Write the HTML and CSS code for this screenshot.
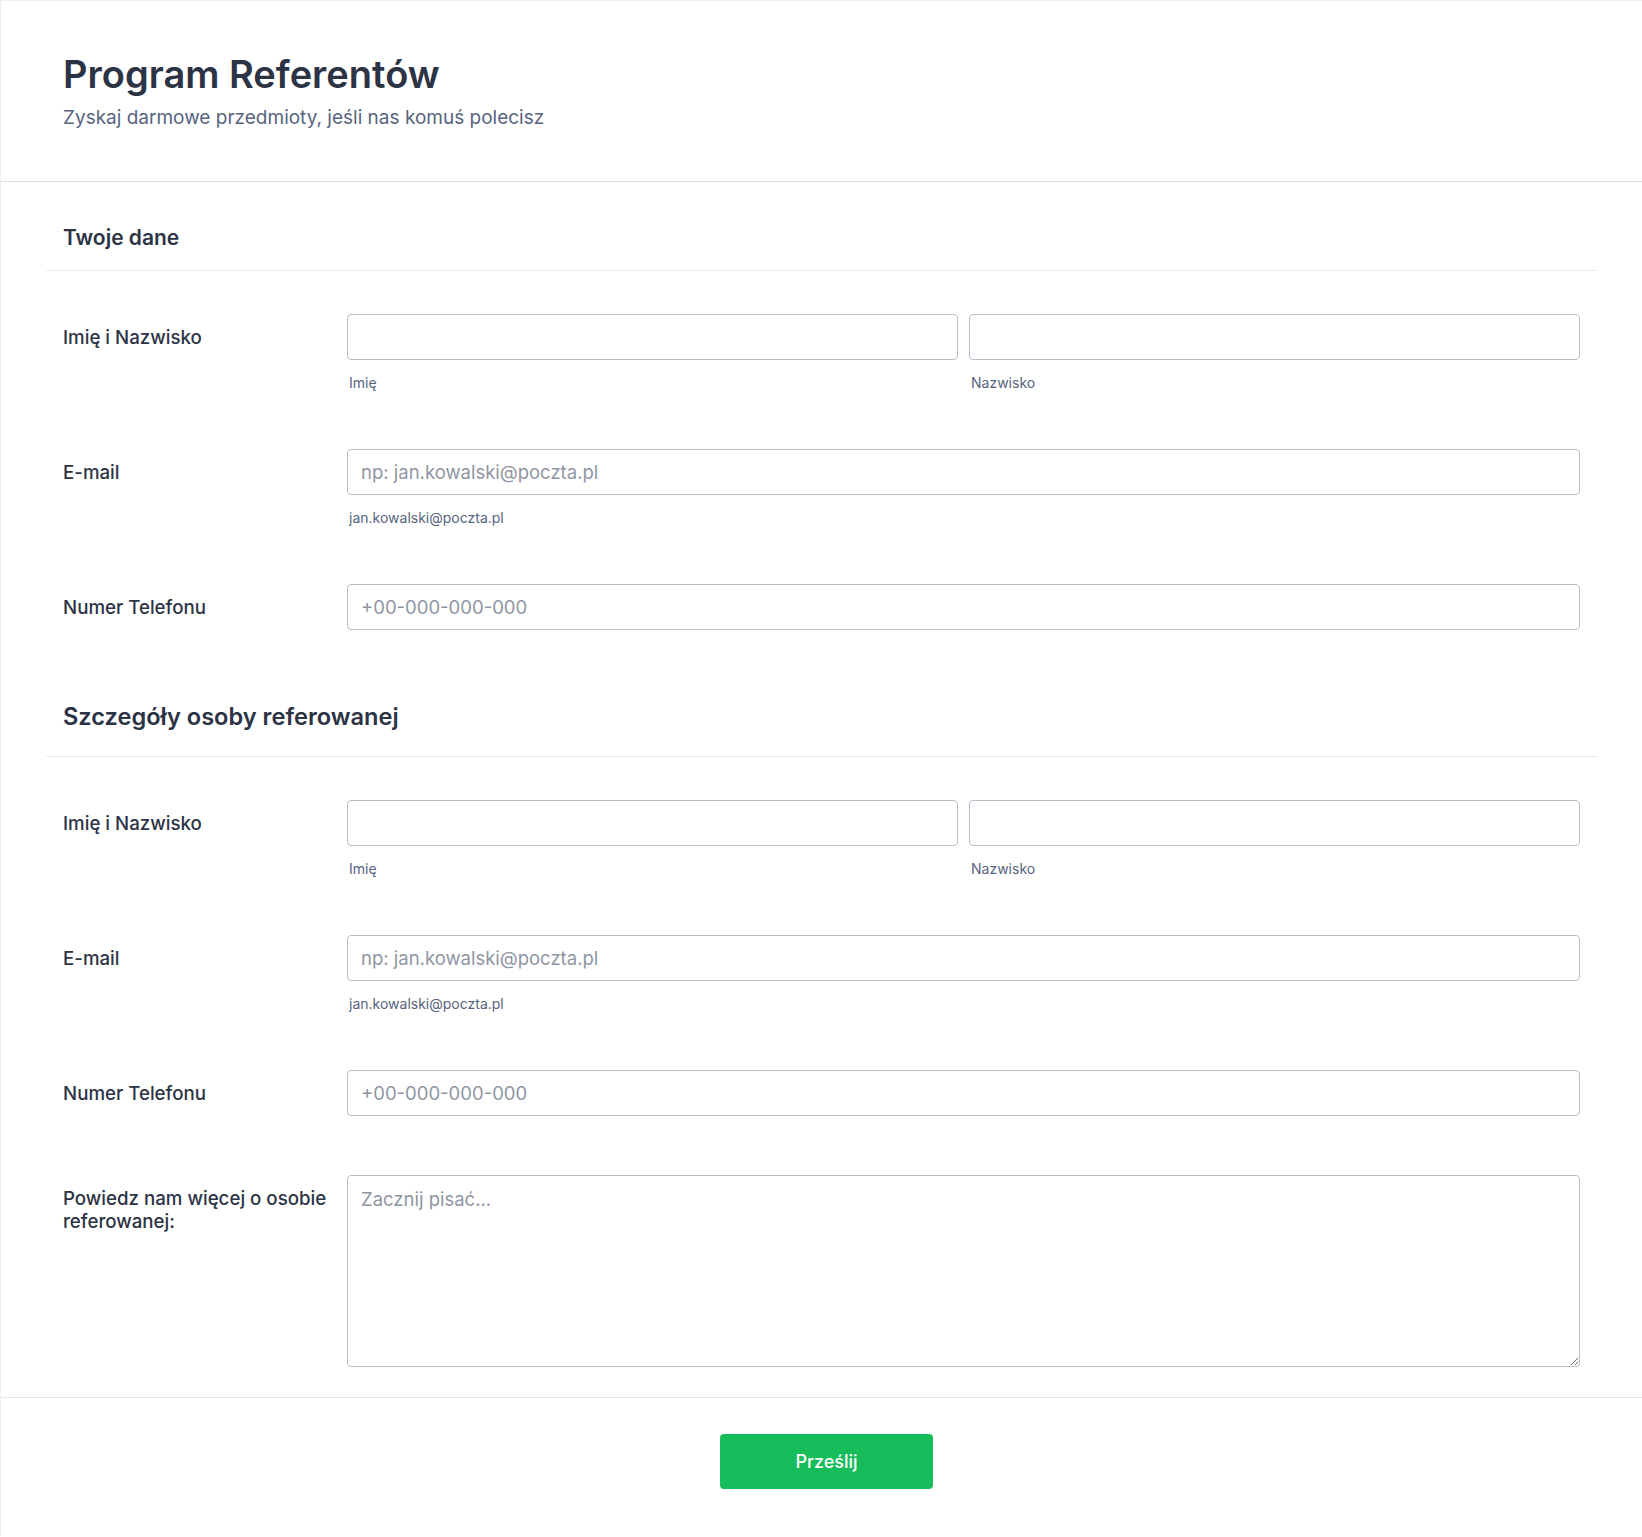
FILE: index.html
```html
<!DOCTYPE html>
<html>
<head>
    <title>Program Referentów</title>
    <link rel="stylesheet" href="styles.css">
</head>
<body>

    <form class="card" onsubmit="return false;">
        <div class="form-header">
            <h1>Program Referentów</h1>
            <p>Zyskaj darmowe przedmioty, jeśli nas komuś polecisz</p>
        </div>

        <div class="section">
            <h2 class="section-title first">Twoje dane</h2>
            <div class="section-body">
                <div class="field">
                    <label>Imię i Nazwisko</label>
                    <div class="two-cols">
                        <div>
                            <input type="text">
                            <span class="sublabel">Imię</span>
                        </div>
                        <div>
                            <input type="text">
                            <span class="sublabel">Nazwisko</span>
                        </div>
                    </div>
                </div>
                <div class="field">
                    <label>E-mail</label>
                    <div>
                        <input type="email" placeholder="np: jan.kowalski@poczta.pl">
                        <span class="sublabel">jan.kowalski@poczta.pl</span>
                    </div>
                </div>
                <div class="field plain">
                    <label>Numer Telefonu</label>
                    <div>
                        <input type="tel" placeholder="+00-000-000-000">
                    </div>
                </div>
            </div>
        </div>

        <div class="section">
            <h2 class="section-title">Szczegóły osoby referowanej</h2>
            <div class="section-body">
                <div class="field">
                    <label>Imię i Nazwisko</label>
                    <div class="two-cols">
                        <div>
                            <input type="text">
                            <span class="sublabel">Imię</span>
                        </div>
                        <div>
                            <input type="text">
                            <span class="sublabel">Nazwisko</span>
                        </div>
                    </div>
                </div>
                <div class="field">
                    <label>E-mail</label>
                    <div>
                        <input type="email" placeholder="np: jan.kowalski@poczta.pl">
                        <span class="sublabel">jan.kowalski@poczta.pl</span>
                    </div>
                </div>
                <div class="field plain">
                    <label>Numer Telefonu</label>
                    <div>
                        <input type="tel" placeholder="+00-000-000-000">
                    </div>
                </div>
                <div class="field">
                    <label>Powiedz nam więcej o osobie referowanej:</label>
                    <div>
                        <textarea placeholder="Zacznij pisać..."></textarea>
                    </div>
                </div>
            </div>
        </div>

        <div class="form-footer">
            <button type="submit" class="submit-btn">Prześlij</button>
        </div>
    </form>

</body>
</html>
```

FILE: styles.css
```css
body {
    background-color: #ffffff;
    color: #2c3345;
    font-family: Inter, "Noto Sans", Arial, sans-serif;
    margin: 0;
    padding: 0;
}

.card {
    display: block;
    border-left: 1px solid #eeeff3;
    border-top: 1px solid #eeeff3;
    background-color: #ffffff;
}

.form-header {
    padding: 50px 62px 50px;
    border-bottom: 1px solid #dcdfe6;
}

.form-header h1 {
    margin: 0;
    font-size: 38px;
    line-height: 46px;
    font-weight: 600;
    color: #2c3345;
}

.form-header p {
    margin: 7px 0 0;
    font-size: 19px;
    line-height: 27px;
    color: #57647e;
}

.section {
    margin: 0 45px;
}

.section-title {
    margin: 0;
    padding: 42px 17px 24px;
    font-size: 23.6px;
    line-height: 30px;
    font-weight: 600;
    color: #2c3345;
    border-bottom: 1px solid #eaebf2;
}

.section-title.first {
    padding-bottom: 18px;
    font-size: 21px;
    line-height: 28px;
}

.section-body {
    padding: 43px 0 30px;
}

.field {
    display: grid;
    grid-template-columns: 284px 1fr;
    padding: 0 17px;
    margin-bottom: 56px;
}

.field.plain {
    margin-bottom: 59px;
}

.field:last-child {
    margin-bottom: 0;
}

.field label {
    padding: 12px 12px 0 0;
    font-size: 18.7px;
    line-height: 23px;
    font-weight: 500;
    color: #2c3345;
}

.two-cols {
    display: grid;
    grid-template-columns: 1fr 1fr;
    gap: 11px;
}

input,
textarea {
    display: block;
    width: 100%;
    box-sizing: border-box;
    height: 46px;
    padding: 0 13px;
    border: 1px solid #b8bdc9;
    border-radius: 4px;
    font-family: Inter, "Noto Sans", Arial, sans-serif;
    font-size: 18.5px;
    color: #2c3345;
    background-color: #ffffff;
}

textarea {
    height: 192px;
    padding: 12px 13px;
    line-height: 23px;
}

input::placeholder,
textarea::placeholder {
    color: #8f96a3;
}

.sublabel {
    display: block;
    margin-top: 13px;
    padding-left: 2px;
    font-size: 14px;
    line-height: 20px;
    color: #57647e;
}

.form-footer {
    border-top: 1px solid #e6e8ee;
    padding: 36px 0 47px 10px;
    text-align: center;
}

.submit-btn {
    width: 213px;
    height: 55px;
    border: none;
    border-radius: 4px;
    background-color: #18bd5b;
    color: #ffffff;
    font-family: Inter, "Noto Sans", Arial, sans-serif;
    font-size: 18px;
    font-weight: 500;
    cursor: pointer;
}
```
